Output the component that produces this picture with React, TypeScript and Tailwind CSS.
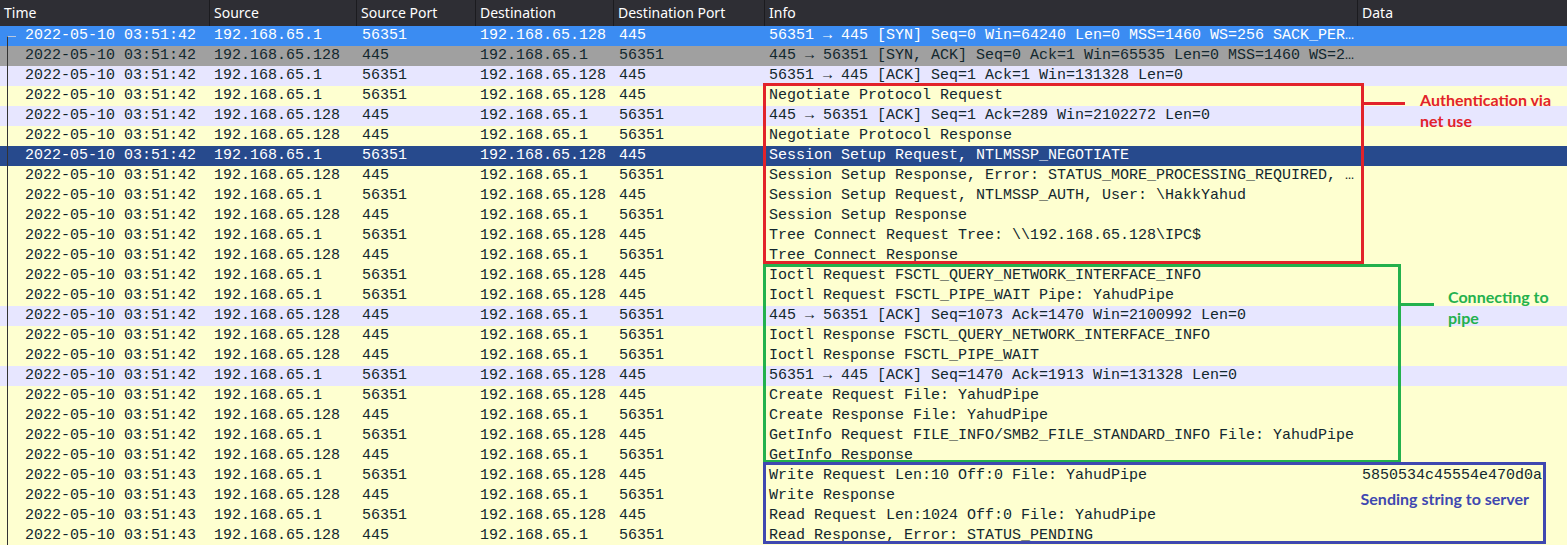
import React from "react";

type Kind = "sel" | "gray" | "tcp" | "smb" | "dark";

type Pkt = {
  t: string;
  src: string;
  sp: string;
  dst: string;
  dp: string;
  info: string;
  data?: string;
  kind: Kind;
};

const A = "192.168.65.1";
const B = "192.168.65.128";

const c2s = (t: string, info: string, kind: Kind = "smb", data?: string): Pkt => ({
  t,
  src: A,
  sp: "56351",
  dst: B,
  dp: "445",
  info,
  kind,
  data,
});
const s2c = (t: string, info: string, kind: Kind = "smb"): Pkt => ({
  t,
  src: B,
  sp: "445",
  dst: A,
  dp: "56351",
  info,
  kind,
});

const T1 = "2022-05-10 03:51:42";
const T2 = "2022-05-10 03:51:43";

const packets: Pkt[] = [
  c2s(T1, "56351 → 445 [SYN] Seq=0 Win=64240 Len=0 MSS=1460 WS=256 SACK_PER…", "sel"),
  s2c(T1, "445 → 56351 [SYN, ACK] Seq=0 Ack=1 Win=65535 Len=0 MSS=1460 WS=2…", "gray"),
  c2s(T1, "56351 → 445 [ACK] Seq=1 Ack=1 Win=131328 Len=0", "tcp"),
  c2s(T1, "Negotiate Protocol Request"),
  s2c(T1, "445 → 56351 [ACK] Seq=1 Ack=289 Win=2102272 Len=0", "tcp"),
  s2c(T1, "Negotiate Protocol Response"),
  c2s(T1, "Session Setup Request, NTLMSSP_NEGOTIATE", "dark"),
  s2c(T1, "Session Setup Response, Error: STATUS_MORE_PROCESSING_REQUIRED, …"),
  c2s(T1, "Session Setup Request, NTLMSSP_AUTH, User: \\HakkYahud"),
  s2c(T1, "Session Setup Response"),
  c2s(T1, "Tree Connect Request Tree: \\\\192.168.65.128\\IPC$"),
  s2c(T1, "Tree Connect Response"),
  c2s(T1, "Ioctl Request FSCTL_QUERY_NETWORK_INTERFACE_INFO"),
  c2s(T1, "Ioctl Request FSCTL_PIPE_WAIT Pipe: YahudPipe"),
  s2c(T1, "445 → 56351 [ACK] Seq=1073 Ack=1470 Win=2100992 Len=0", "tcp"),
  s2c(T1, "Ioctl Response FSCTL_QUERY_NETWORK_INTERFACE_INFO"),
  s2c(T1, "Ioctl Response FSCTL_PIPE_WAIT"),
  c2s(T1, "56351 → 445 [ACK] Seq=1470 Ack=1913 Win=131328 Len=0", "tcp"),
  c2s(T1, "Create Request File: YahudPipe"),
  s2c(T1, "Create Response File: YahudPipe"),
  c2s(T1, "GetInfo Request FILE_INFO/SMB2_FILE_STANDARD_INFO File: YahudPipe"),
  s2c(T1, "GetInfo Response"),
  c2s(T2, "Write Request Len:10 Off:0 File: YahudPipe", "smb", "5850534c45554e470d0a"),
  s2c(T2, "Write Response"),
  c2s(T2, "Read Request Len:1024 Off:0 File: YahudPipe"),
  s2c(T2, "Read Response, Error: STATUS_PENDING"),
];

const rowClass: Record<Kind, string> = {
  sel: "bg-[#3b8cf2] text-white",
  gray: "bg-[#a0a0a0] text-[#12272e]",
  tcp: "bg-[#e7e6ff] text-[#12272e]",
  smb: "bg-[#feffd0] text-[#12272e]",
  dark: "bg-[#274a8d] text-white",
};

const cols = [
  { name: "Time", w: "w-[210px]" },
  { name: "Source", w: "w-[147px]" },
  { name: "Source Port", w: "w-[119px]" },
  { name: "Destination", w: "w-[138px]" },
  { name: "Destination Port", w: "w-[151px]" },
  { name: "Info", w: "w-[593px]" },
  { name: "Data", w: "flex-1" },
];

function Header() {
  return (
    <div className="flex h-[26px] bg-[#2e2e34] text-white text-[14px] font-['Noto_Sans',sans-serif]">
      {cols.map((c, i) => (
        <div
          key={c.name}
          className={`${c.w} shrink-0 flex items-center pl-[4px] pb-[2px] ${i < cols.length - 1 ? "border-r border-[#1b1b1f]" : ""}`}
        >
          {c.name}
        </div>
      ))}
    </div>
  );
}

function Row({ p }: { p: Pkt }) {
  return (
    <div
      className={`flex h-[20px] items-center whitespace-pre text-[15px] leading-[20px] font-['Liberation_Mono',monospace] ${rowClass[p.kind]}`}
    >
      <div className="w-[210px] shrink-0 pl-[25px]">{p.t}</div>
      <div className="w-[147px] shrink-0 pl-[4px]">{p.src}</div>
      <div className="w-[119px] shrink-0 pl-[5px]">{p.sp}</div>
      <div className="w-[138px] shrink-0 pl-[4px]">{p.dst}</div>
      <div className="w-[151px] shrink-0 pl-[5px]">{p.dp}</div>
      <div className="w-[593px] shrink-0 pl-[4px] overflow-hidden">{p.info}</div>
      <div className="flex-1 pl-[4px] overflow-hidden">{p.data ?? ""}</div>
    </div>
  );
}

const label = "text-[16px] leading-[21px] font-bold font-['Lato',sans-serif] whitespace-nowrap";

export default function App() {
  return (
    <div className="w-[1567px] h-[545px] bg-white overflow-hidden">
      <Header />
      <div className="relative">
        {packets.map((p, i) => (
          <Row key={i} p={p} />
        ))}

        {/* conversation tree line */}
        <div className="absolute left-[7px] top-[10px] bottom-0 w-[9px] border-l border-t border-l-[#333] border-t-[#b8c8e0]" />

        {/* annotation: authentication */}
        <div className="absolute left-[763px] top-[57px] flex items-start">
          <div className="w-[601px] h-[181px] border-[3px] border-[#e2232a]" />
          <div className="mt-[19px] w-[41px] h-[3px] bg-[#e2232a]" />
          <div className={`ml-[15px] mt-[6px] text-[#e2232a] ${label}`}>
            Authentication via
            <br />
            net use
          </div>
        </div>

        {/* annotation: pipe */}
        <div className="absolute left-[763px] top-[238px] flex items-start">
          <div className="w-[638px] h-[199px] border-[3px] border-[#23b14d]" />
          <div className="mt-[39px] w-[33px] h-[3px] bg-[#23b14d]" />
          <div className={`ml-[14px] mt-[22px] text-[#23b14d] ${label}`}>
            Connecting to
            <br />
            pipe
          </div>
        </div>

        {/* annotation: write */}
        <div className="absolute left-[763px] top-[436px] w-[783px] h-[82px] border-[3px] border-[#3f48b0] flex justify-end pr-[14px] pt-[23px]">
          <div className={`text-[#3f48b0] ${label}`}>Sending string to server</div>
        </div>
      </div>
    </div>
  );
}
